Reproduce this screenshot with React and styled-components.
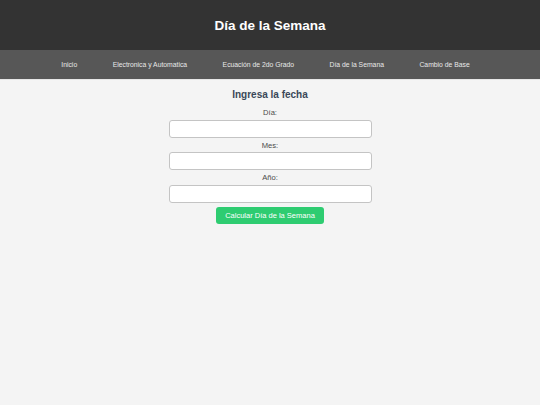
import React, { useState } from 'react';
import styled, { createGlobalStyle } from 'styled-components';

const GlobalStyle = createGlobalStyle`
  html, body {
    margin: 0;
    padding: 0;
    background: #f4f4f4;
    font-family: "Liberation Sans", Arial, Helvetica, sans-serif;
  }
  * {
    box-sizing: border-box;
  }
`;

const Header = styled.header`
  background: #333333;
  height: 50px;
  display: flex;
  align-items: center;
  justify-content: center;
`;

const Title = styled.h1`
  margin: 0;
  color: #ffffff;
  font-size: 13.5px;
  font-weight: bold;
`;

const Nav = styled.nav`
  background: #575757;
  height: 30px;
  display: flex;
  align-items: center;
  justify-content: center;
  gap: 35.5px;
  padding-right: 9px;
  border-bottom: 1px solid #e6e6e6;
`;

const NavLink = styled.a`
  color: #e8e8e8;
  font-size: 6.8px;
  text-decoration: none;
  cursor: pointer;
`;

const Main = styled.main`
  display: flex;
  flex-direction: column;
  align-items: center;
  padding-top: 9px;
`;

const Heading = styled.h2`
  margin: 0 0 7px;
  color: #3a4858;
  font-size: 10px;
  line-height: 12px;
  font-weight: bold;
`;

const Form = styled.form`
  width: 203px;
  display: flex;
  flex-direction: column;
  align-items: center;
`;

const Label = styled.label`
  color: #4a4a4a;
  font-size: 7.6px;
  line-height: 9px;
  margin-bottom: 2.5px;
`;

const Input = styled.input`
  width: 100%;
  height: 18px;
  margin: 0 0 3px;
  border: 1px solid #c4c4c4;
  border-radius: 3px;
  background: #ffffff;
  font-size: 7.5px;
  padding: 0 4px;
  outline: none;
`;

const Button = styled.button`
  margin-top: 1px;
  width: 108px;
  height: 17px;
  border: none;
  border-radius: 3px;
  background: #2ecc71;
  color: #ffffff;
  font-family: inherit;
  font-size: 7.5px;
  cursor: pointer;

  &:hover {
    background: #27ae60;
  }
`;

const links = [
  'Inicio',
  'Electronica y Automatica',
  'Ecuación de 2do Grado',
  'Día de la Semana',
  'Cambio de Base',
];

const App = () => {
  const [fecha, setFecha] = useState({ dia: '', mes: '', anio: '' });

  const handleChange = (e) => {
    setFecha({ ...fecha, [e.target.name]: e.target.value });
  };

  const handleSubmit = (e) => {
    e.preventDefault();
  };

  return (
    <>
      <GlobalStyle />
      <Header>
        <Title>Día de la Semana</Title>
      </Header>
      <Nav>
        {links.map((l) => (
          <NavLink key={l}>{l}</NavLink>
        ))}
      </Nav>
      <Main>
        <Heading>Ingresa la fecha</Heading>
        <Form onSubmit={handleSubmit}>
          <Label htmlFor="dia">Día:</Label>
          <Input id="dia" name="dia" type="number" value={fecha.dia} onChange={handleChange} />
          <Label htmlFor="mes">Mes:</Label>
          <Input id="mes" name="mes" type="number" value={fecha.mes} onChange={handleChange} />
          <Label htmlFor="anio">Año:</Label>
          <Input id="anio" name="anio" type="number" value={fecha.anio} onChange={handleChange} />
          <Button type="submit">Calcular Día de la Semana</Button>
        </Form>
      </Main>
    </>
  );
};

export default App;
